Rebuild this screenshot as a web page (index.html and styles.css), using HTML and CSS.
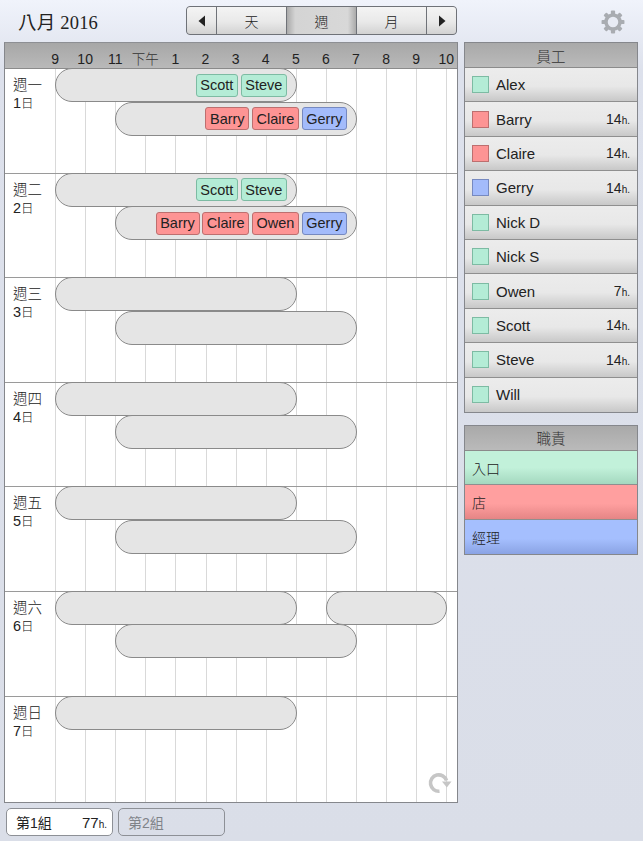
FILE: index.html
```html
<!DOCTYPE html>
<html lang="zh-Hant">
<head>
<meta charset="utf-8">
<title>八月 2016</title>
<link rel="stylesheet" href="styles.css">
</head>
<body>
<div class="app">
  <header class="topbar">
    <div class="month">八月 2016</div>
    <nav class="seg">
      <div class="seg-btn arrow"><svg width="8" height="12" viewBox="0 0 8 12"><path class="tri" d="M7 0.5V11.5L0.5 6Z"/></svg></div>
      <div class="seg-btn wide">天</div>
      <div class="seg-btn wide active">週</div>
      <div class="seg-btn wide">月</div>
      <div class="seg-btn arrow"><svg width="8" height="12" viewBox="0 0 8 12"><path class="tri" d="M1 0.5V11.5L7.5 6Z"/></svg></div>
    </nav>
    <svg class="gear" width="24" height="24" viewBox="0 0 26 26">
      <g class="gear-teeth">
        <rect x="10.7" y="0.6" width="4.6" height="24.8" rx="1"/>
        <rect x="10.7" y="0.6" width="4.6" height="24.8" rx="1" transform="rotate(45 13 13)"/>
        <rect x="10.7" y="0.6" width="4.6" height="24.8" rx="1" transform="rotate(90 13 13)"/>
        <rect x="10.7" y="0.6" width="4.6" height="24.8" rx="1" transform="rotate(135 13 13)"/>
      </g>
      <circle class="gear-ring" cx="13" cy="13" r="7.6"/>
    </svg>
  </header>

  <main class="content">
    <section class="calendar">
      <div class="hours">
        <span>9</span><span>10</span><span>11</span><span class="cjk">下午</span><span>1</span><span>2</span><span>3</span><span>4</span><span>5</span><span>6</span><span>7</span><span>8</span><span>9</span><span>10</span>
      </div>
      <div class="days">
        <div class="day">
          <div class="day-label"><div class="wk">週一</div><div>1<span class="small">日</span></div></div>
          <div class="track">
            <div class="shift early">
              <span class="chip green">Scott</span><span class="chip green">Steve</span>
            </div>
            <div class="shift late">
              <span class="chip red">Barry</span><span class="chip red">Claire</span><span class="chip blue">Gerry</span>
            </div>
          </div>
        </div>
        <div class="day">
          <div class="day-label"><div class="wk">週二</div><div>2<span class="small">日</span></div></div>
          <div class="track">
            <div class="shift early">
              <span class="chip green">Scott</span><span class="chip green">Steve</span>
            </div>
            <div class="shift late">
              <span class="chip red">Barry</span><span class="chip red">Claire</span><span class="chip red">Owen</span><span class="chip blue">Gerry</span>
            </div>
          </div>
        </div>
        <div class="day">
          <div class="day-label"><div class="wk">週三</div><div>3<span class="small">日</span></div></div>
          <div class="track"><div class="shift early"></div><div class="shift late"></div></div>
        </div>
        <div class="day">
          <div class="day-label"><div class="wk">週四</div><div>4<span class="small">日</span></div></div>
          <div class="track"><div class="shift early"></div><div class="shift late"></div></div>
        </div>
        <div class="day">
          <div class="day-label"><div class="wk">週五</div><div>5<span class="small">日</span></div></div>
          <div class="track"><div class="shift early"></div><div class="shift late"></div></div>
        </div>
        <div class="day">
          <div class="day-label"><div class="wk">週六</div><div>6<span class="small">日</span></div></div>
          <div class="track"><div class="shift early"></div><div class="shift evening"></div><div class="shift late"></div></div>
        </div>
        <div class="day">
          <div class="day-label"><div class="wk">週日</div><div>7<span class="small">日</span></div></div>
          <div class="track"><div class="shift early"></div></div>
        </div>
      </div>
      <svg class="refresh" width="26" height="26" viewBox="0 0 26 26">
        <path class="refresh-arc" d="M13.5 21.2A8.2 8.2 0 1 1 20.5 10.5"/>
        <path class="refresh-head" d="M16 11.5H25.5L20.8 17.5Z"/>
      </svg>
    </section>

    <aside class="side">
      <section class="panel">
        <h2 class="panel-head">員工</h2>
        <div class="staff"><i class="swatch green"></i><span class="name">Alex</span></div>
        <div class="staff"><i class="swatch red"></i><span class="name">Barry</span><span class="hrs">14<small>h.</small></span></div>
        <div class="staff"><i class="swatch red"></i><span class="name">Claire</span><span class="hrs">14<small>h.</small></span></div>
        <div class="staff"><i class="swatch blue"></i><span class="name">Gerry</span><span class="hrs">14<small>h.</small></span></div>
        <div class="staff"><i class="swatch green"></i><span class="name">Nick D</span></div>
        <div class="staff"><i class="swatch green"></i><span class="name">Nick S</span></div>
        <div class="staff"><i class="swatch green"></i><span class="name">Owen</span><span class="hrs">7<small>h.</small></span></div>
        <div class="staff"><i class="swatch green"></i><span class="name">Scott</span><span class="hrs">14<small>h.</small></span></div>
        <div class="staff"><i class="swatch green"></i><span class="name">Steve</span><span class="hrs">14<small>h.</small></span></div>
        <div class="staff"><i class="swatch green"></i><span class="name">Will</span></div>
      </section>
      <section class="panel">
        <h2 class="panel-head">職責</h2>
        <div class="role role-green">入口</div>
        <div class="role role-red">店</div>
        <div class="role role-blue">經理</div>
      </section>
    </aside>
  </main>

  <footer class="tabs">
    <div class="tab on"><span>第1組</span><span class="hrs">77<small>h.</small></span></div>
    <div class="tab off"><span>第2組</span></div>
  </footer>
</div>
</body>
</html>
```

FILE: styles.css
```css
* { box-sizing: border-box; }
html, body { margin: 0; padding: 0; }
body {
  width: 643px;
  height: 841px;
  overflow: hidden;
  font-family: "Liberation Sans", "Noto Sans CJK TC", sans-serif;
  color: #222;
  background: linear-gradient(#f0f3fb 0, #dde1ec 70px, #dadee8 100%);
}
.cjk { font-family: "Noto Sans CJK TC", sans-serif; font-weight: 300; }
.app { display: flex; flex-direction: column; height: 841px; padding: 0 5px 0 4px; }

.topbar { display: flex; align-items: center; height: 42px; padding: 0 0 0 14px; }
.month { width: 168px; font-family: "Liberation Serif", "Noto Sans CJK TC", serif; font-size: 18.5px; color: #222; letter-spacing: 0.2px; padding-bottom: 1px; }
.seg {
  display: flex;
  height: 29px;
  width: 271px;
  margin-bottom: 1px;
  border: 1px solid #6f7278;
  border-radius: 4px;
  overflow: hidden;
  background: #6f7278;
  gap: 1px;
}
.seg-btn {
  display: flex; align-items: center; justify-content: center;
  font-family: "Noto Sans CJK TC", sans-serif; font-weight: 300; font-size: 14px; color: #222;
  background: linear-gradient(#f4f4f4, #e9e9e9 55%, #d2d2d2);
}
.seg-btn.arrow { width: 29px; }
.seg-btn.wide { flex: 1; }
.seg-btn.active { background: linear-gradient(90deg, #aaa, #d4d4d4 12%, #d8d8d8 88%, #aaa); }
.tri { fill: #222; }
.gear { margin-left: 144px; margin-top: 1px; }
.gear-teeth rect { fill: #a9acb1; }
.gear-ring { fill: #e8ebf4; stroke: #a9acb1; stroke-width: 3.8; }

.content { display: flex; gap: 6px; align-items: flex-start; height: 761px; }

.calendar {
  position: relative;
  width: 454px;
  height: 761px;
  border: 1px solid #85878c;
  border-top-color: #8d8f94;
  background: #fff;
  display: flex;
  flex-direction: column;
}
.hours {
  height: 26px;
  flex: none;
  display: flex;
  padding-left: 35px;
  background: linear-gradient(#a7a7a7, #b9b9b9);
  border-bottom: 1px solid #8b8b8b;
  font-size: 14px;
  color: #222;
  align-items: center;
}
.hours span { width: 30.1px; flex: none; text-align: center; padding-top: 7px; line-height: 17px; white-space: nowrap; }
.hours .cjk { font-size: 13.5px; color: #333; padding-top: 5px; }

.days {
  flex: 1;
  display: flex;
  flex-direction: column;
  background-image: repeating-linear-gradient(90deg, #d9d9d9 0, #d9d9d9 1px, transparent 1px, transparent 30.1px);
  background-position: 50px 0;
  background-size: calc(100% - 50px) 100%;
  background-repeat: no-repeat;
}
.day {
  height: 104.6px;
  flex: none;
  display: flex;
  border-bottom: 1px solid #9a9a9a;
}
.day:last-child { border-bottom: 0; flex: 1; }
.day-label { width: 50px; flex: none; padding: 7px 0 0 8px; font-size: 14.5px; line-height: 18px; color: #222; background: #fff; }
.day-label .wk { font-weight: 300; }
.day-label .small { font-size: 12.5px; font-weight: 300; }

.track {
  display: grid;
  grid-template-columns: repeat(14, 30.1px);
  grid-template-rows: 33.5px 33.5px;
  align-content: start;
  margin-top: -1px;
}
.shift {
  display: flex;
  align-items: center;
  justify-content: flex-end;
  gap: 2.5px;
  height: 34px;
  padding-right: 8.5px;
  background: #e5e5e5;
  border: 1px solid #8a8a8a;
  border-radius: 17px;
}
.early { grid-column: 1 / 9; grid-row: 1; width: 241.5px; }
.late { grid-column: 3 / 11; grid-row: 2; width: 241.5px; }
.evening { grid-column: 10 / 14; grid-row: 1; width: 121px; }

.chip {
  height: 23px;
  padding: 0 3.7px;
  display: flex;
  align-items: center;
  font-size: 14.5px;
  color: #222;
  border-radius: 3px;
  border: 1px solid;
}
.chip.green { background: #b4ecd6; border-color: #7dbba3; }
.chip.red { background: #fd9494; border-color: #bd6f6f; }
.chip.blue { background: #a3bbfb; border-color: #7689c0; }

.refresh { position: absolute; right: 5px; bottom: 6px; }
.refresh-arc { fill: none; stroke: #c6c6c6; stroke-width: 3.6; }
.refresh-head { fill: #c6c6c6; }

.side { width: 174px; display: flex; flex-direction: column; gap: 12px; }
.panel { border: 1px solid #85878c; display: flex; flex-direction: column; background: #e8e8e8; }
.panel-head {
  margin: 0;
  height: 25px;
  flex: none;
  display: flex; align-items: center; justify-content: center;
  font-family: "Noto Sans CJK TC", sans-serif;
  font-weight: 300;
  font-size: 14.5px;
  color: #333;
  background: linear-gradient(#a9a9a9, #bababa);
  border-bottom: 1px solid #8b8b8b;
}
.staff {
  height: 34.4px;
  flex: none;
  display: flex;
  align-items: center;
  padding: 0 7px 0 7px;
  font-size: 15px;
  color: #222;
  background: linear-gradient(#ececec, #e8e8e8 55%, #c8c8c8);
  border-bottom: 1px solid #8f8f8f;
}
.staff:last-child { border-bottom: 0; }
.swatch { width: 17px; height: 17px; border: 1px solid; flex: none; margin-right: 7px; }
.swatch.green { background: #b4ecd6; border-color: #7dbba3; }
.swatch.red { background: #fd9494; border-color: #bd6f6f; }
.swatch.blue { background: #a3bbfb; border-color: #7689c0; }
.name { flex: 1; }
.hrs { font-size: 14px; color: #222; }
.hrs small { font-size: 10px; }

.role {
  height: 34.4px;
  flex: none;
  display: flex;
  align-items: center;
  padding-left: 7px;
  font-family: "Noto Sans CJK TC", sans-serif;
  font-weight: 300;
  font-size: 14px;
  color: #222;
  border-bottom: 1px solid #8f8f8f;
}
.role:last-child { border-bottom: 0; }
.role-green { background: linear-gradient(#c2f1da, #c2f1da 50%, #a4d8bf); }
.role-red { background: linear-gradient(#ff9f9f, #ff9f9f 55%, #e58585); }
.role-blue { background: linear-gradient(#a5bffe, #a5bffe 55%, #8aa3e4); }

.tabs { display: flex; gap: 5px; padding: 5px 0 0 2px; }
.tab {
  width: 107px;
  height: 28px;
  border-radius: 5px;
  border: 1px solid #8d9096;
  display: flex;
  align-items: center;
  justify-content: space-between;
  padding: 0 5px 0 9px;
  font-size: 14px;
}
.tab.on { background: #fff; color: #222; }
.tab.off { color: #808388; }
.tab .hrs { font-size: 15px; }
```
